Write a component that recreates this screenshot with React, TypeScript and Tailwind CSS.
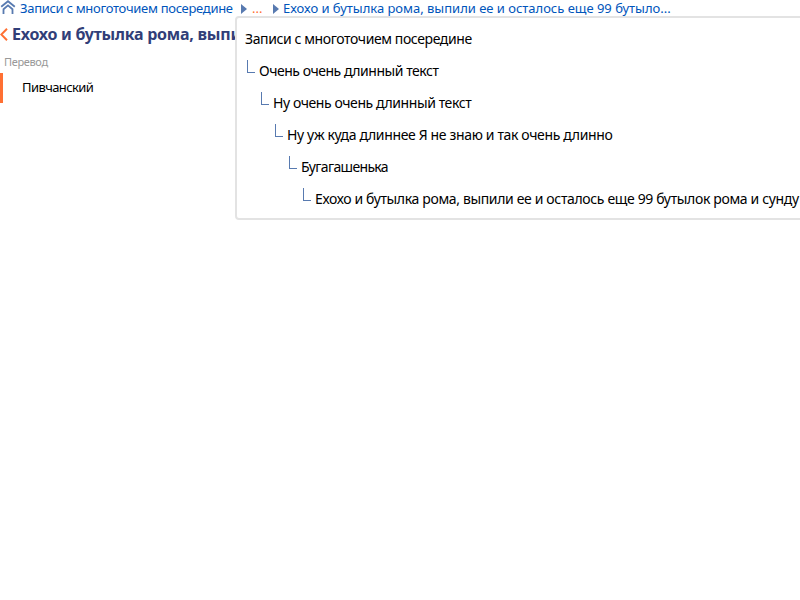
const path = [
  { text: "Записи с многоточием посередине", indent: "pl-0", tracking: "tracking-[-0.4px]" },
  { text: "Очень очень длинный текст", indent: "pl-0", tracking: "tracking-[-0.46px]" },
  { text: "Ну очень очень длинный текст", indent: "pl-[14px]", tracking: "tracking-[-0.41px]" },
  { text: "Ну уж куда длиннее Я не знаю и так очень длинно", indent: "pl-[28px]", tracking: "tracking-[-0.35px]" },
  { text: "Бугагашенька", indent: "pl-[42px]", tracking: "tracking-[-0.65px]" },
  { text: "Ехохо и бутылка рома, выпили ее и осталось еще 99 бутылок рома и сунду", indent: "pl-[56px]", tracking: "tracking-[-0.35px]" },
];

function HomeIcon() {
  return (
    <svg className="mb-[3px] h-[14px] w-4 shrink-0" viewBox="0 0 16 14" fill="none" stroke="#587ab0" strokeWidth="1.8">
      <path d="M1.2 6.8 8 1.2l6.8 5.6" />
      <path d="M3.5 14V9.2L8 5.4l4.5 3.8V14" />
    </svg>
  );
}

function Arrow() {
  return (
    <svg className="h-[10px] w-[6px] shrink-0" viewBox="0 0 6 10" fill="#587ab0">
      <path d="M0 0 6 5 0 10Z" />
    </svg>
  );
}

export default function App() {
  return (
    <div className="relative h-[600px] w-[800px] overflow-hidden bg-white font-['Noto_Sans','Open_Sans',sans-serif] text-[14px] text-black">
      <nav className="flex h-[17px] items-center whitespace-nowrap text-[13px] leading-[17px] text-[#0055bb]">
        <HomeIcon />
        <span className="ml-1 w-[221px] tracking-[-0.3px]">Записи с многоточием посередине</span>
        <Arrow />
        <span className="ml-[5px] w-[21px] text-[#ff7033]">...</span>
        <Arrow />
        <span className="ml-1 tracking-[-0.02px]">Ехохо и бутылка рома, выпили ее и осталось еще 99 бутыло...</span>
      </nav>
      <h1 className="flex h-[35px] w-[240px] items-center whitespace-nowrap text-[16px] font-bold leading-[35px] text-[#313e78]">
        <svg className="h-[13px] w-2 shrink-0" viewBox="0 0 8 13" fill="none" stroke="#ff7033" strokeWidth="2">
          <path d="M7 .8 1.3 6.5 7 12.2" />
        </svg>
        <span className="ml-1 tracking-[-0.24px]">Ехохо и бутылка рома, выпи</span>
      </h1>
      <div className="h-[21px] pl-1 text-[11px] leading-[20px] tracking-[-0.35px] text-[#999999]">Перевод</div>
      <div className="flex h-[30px] w-[235px] items-center border-l-[3px] border-[#ff7033] pl-[19px] text-[13px] tracking-[-0.6px]">Пивчанский</div>

      <div className="absolute left-[235px] top-4 h-[204px] w-[620px] rounded-[4px] border-2 border-[#e3e3e3] bg-white pl-2 pt-1">
        {path.map((item, i) => (
          <div key={item.text} className={`flex h-8 items-center whitespace-nowrap ${item.indent}`}>
            {i > 0 && <i className="mb-2 ml-[2px] mr-1 h-[13px] w-2 border-b border-l border-[#587ab0]" />}
            <span className={item.tracking}>{item.text}</span>
          </div>
        ))}
      </div>
    </div>
  );
}
